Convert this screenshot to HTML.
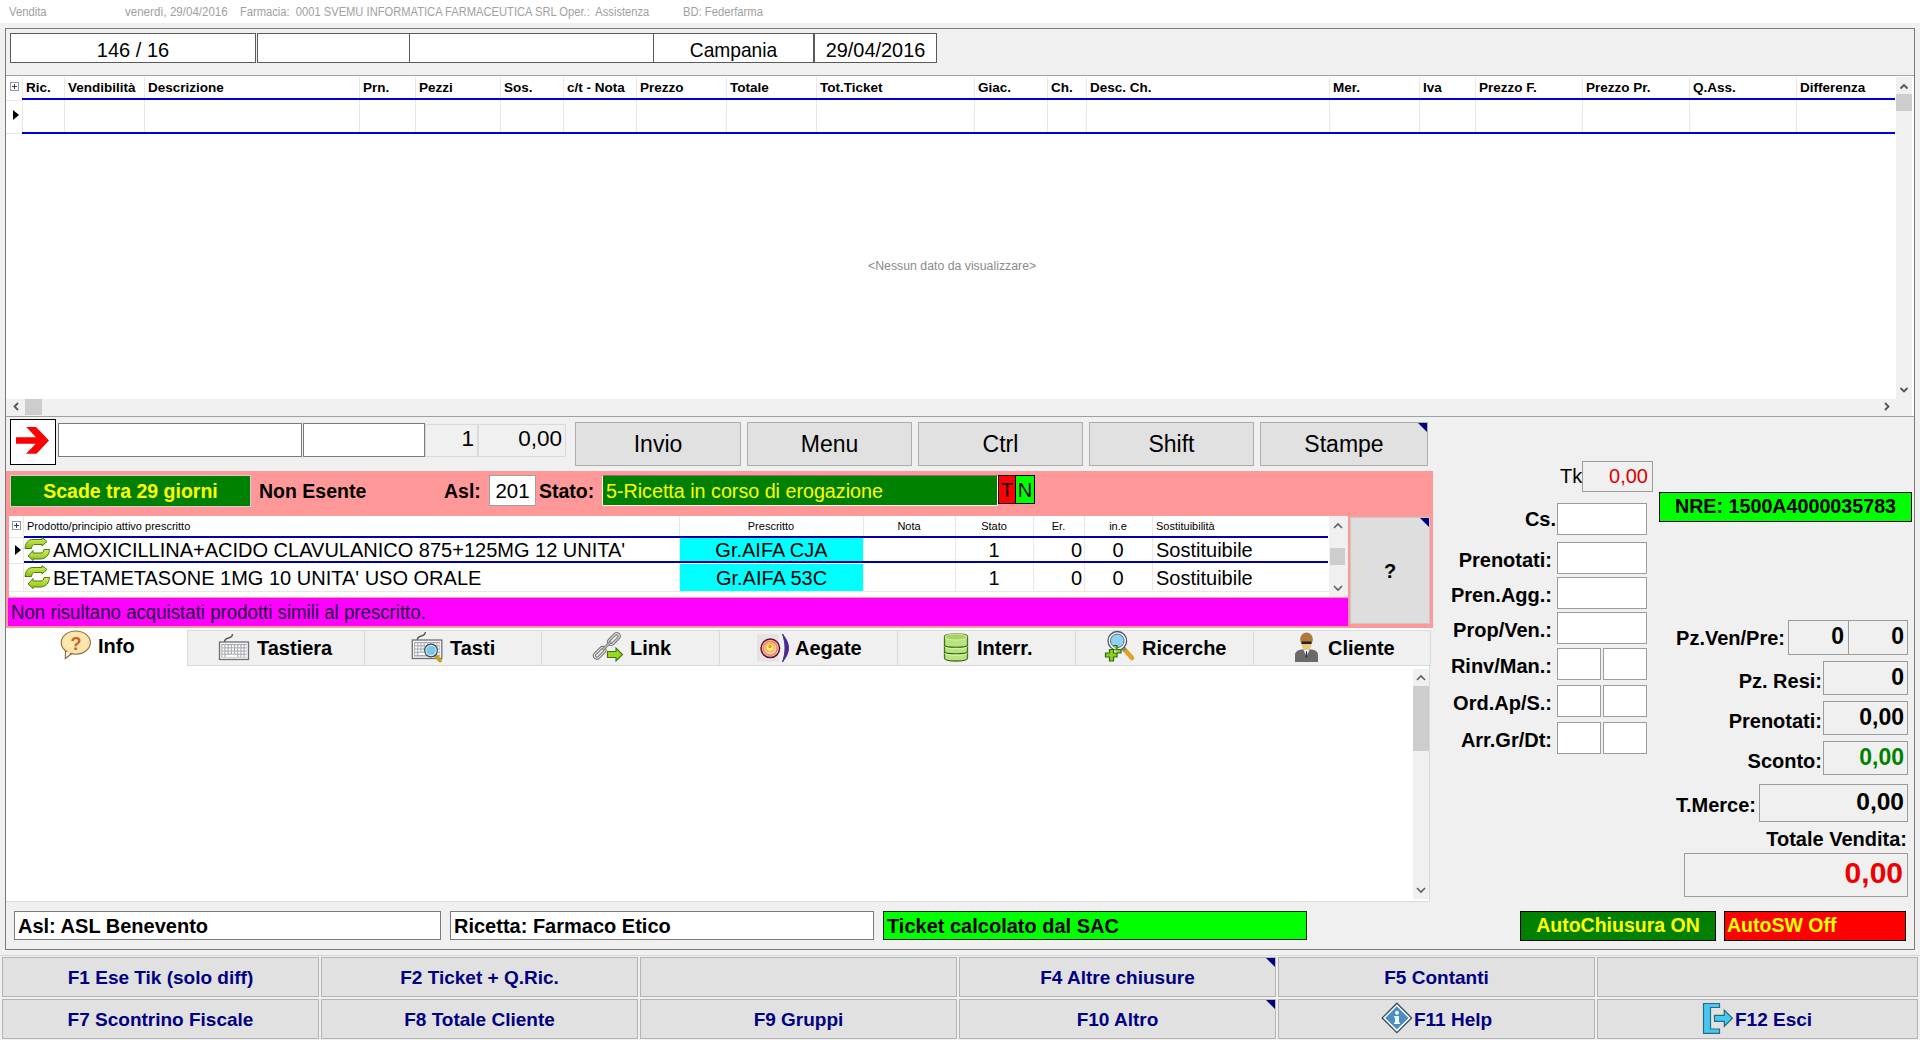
<!DOCTYPE html>
<html><head><meta charset="utf-8">
<style>
*{box-sizing:border-box;margin:0;padding:0}
html,body{width:1920px;height:1040px;overflow:hidden;background:#f0f0f0;font-family:"Liberation Sans",sans-serif;position:relative}
.a{position:absolute}
.t{position:absolute;white-space:nowrap;line-height:1}
</style></head><body>

<div class="a" style="left:0px;top:0px;width:1920px;height:23px;background:#fff;"></div>
<div class="t" style="left:9px;top:6px;font-size:12px;color:#a0a0a0;transform:scaleX(0.94);transform-origin:0 0">Vendita</div>
<div class="t" style="left:125px;top:6px;font-size:12px;color:#a0a0a0;transform:scaleX(0.962);transform-origin:0 0">venerdì, 29/04/2016</div>
<div class="t" style="left:240px;top:6px;font-size:12px;color:#a0a0a0;transform:scaleX(0.93);transform-origin:0 0">Farmacia:&nbsp; 0001 SVEMU INFORMATICA FARMACEUTICA SRL Oper.:&nbsp; Assistenza</div>
<div class="t" style="left:683px;top:6px;font-size:12px;color:#a0a0a0;transform:scaleX(0.937);transform-origin:0 0">BD: Federfarma</div>
<div class="a" style="left:5px;top:28px;width:1910px;height:922px;background:#f0f0f0;border:1px solid #7a7a7a;"></div>
<div class="a" style="left:10px;top:33px;width:246px;height:30px;background:#fff;border:1px solid #5a5a5a;"></div>
<div class="t" style="left:10px;top:39px;font-size:21px;color:#000;width:246px;text-align:center;transform:scaleX(0.953);transform-origin:50% 0">146 / 16</div>
<div class="a" style="left:257px;top:33px;width:153px;height:30px;background:#fff;border:1px solid #5a5a5a;"></div>
<div class="a" style="left:409px;top:33px;width:245px;height:30px;background:#fff;border:1px solid #5a5a5a;"></div>
<div class="a" style="left:653px;top:33px;width:161px;height:30px;background:#fff;border:1px solid #5a5a5a;"></div>
<div class="t" style="left:653px;top:39px;font-size:21px;color:#000;width:161px;text-align:center;transform:scaleX(0.913);transform-origin:50% 0">Campania</div>
<div class="a" style="left:814px;top:33px;width:123px;height:30px;background:#fff;border:1px solid #5a5a5a;"></div>
<div class="t" style="left:814px;top:39px;font-size:21px;color:#000;width:123px;text-align:center;transform:scaleX(0.947);transform-origin:50% 0">29/04/2016</div>
<div class="a" style="left:6px;top:75px;width:1908px;height:342px;background:#fff;border-top:1px solid #a0a0a0;border-bottom:1px solid #a0a0a0"></div>
<div class="a" style="left:22px;top:77px;width:1px;height:56px;background:#e8e8e8;"></div>
<div class="t" style="left:26px;top:81px;font-size:13.5px;color:#000;font-weight:bold;">Ric.</div>
<div class="a" style="left:64px;top:77px;width:1px;height:56px;background:#e8e8e8;"></div>
<div class="t" style="left:68px;top:81px;font-size:13.5px;color:#000;font-weight:bold;">Vendibilità</div>
<div class="a" style="left:144px;top:77px;width:1px;height:56px;background:#e8e8e8;"></div>
<div class="t" style="left:148px;top:81px;font-size:13.5px;color:#000;font-weight:bold;">Descrizione</div>
<div class="a" style="left:359px;top:77px;width:1px;height:56px;background:#e8e8e8;"></div>
<div class="t" style="left:363px;top:81px;font-size:13.5px;color:#000;font-weight:bold;">Prn.</div>
<div class="a" style="left:415px;top:77px;width:1px;height:56px;background:#e8e8e8;"></div>
<div class="t" style="left:419px;top:81px;font-size:13.5px;color:#000;font-weight:bold;">Pezzi</div>
<div class="a" style="left:500px;top:77px;width:1px;height:56px;background:#e8e8e8;"></div>
<div class="t" style="left:504px;top:81px;font-size:13.5px;color:#000;font-weight:bold;">Sos.</div>
<div class="a" style="left:563px;top:77px;width:1px;height:56px;background:#e8e8e8;"></div>
<div class="t" style="left:567px;top:81px;font-size:13.5px;color:#000;font-weight:bold;">c/t - Nota</div>
<div class="a" style="left:636px;top:77px;width:1px;height:56px;background:#e8e8e8;"></div>
<div class="t" style="left:640px;top:81px;font-size:13.5px;color:#000;font-weight:bold;">Prezzo</div>
<div class="a" style="left:726px;top:77px;width:1px;height:56px;background:#e8e8e8;"></div>
<div class="t" style="left:730px;top:81px;font-size:13.5px;color:#000;font-weight:bold;">Totale</div>
<div class="a" style="left:816px;top:77px;width:1px;height:56px;background:#e8e8e8;"></div>
<div class="t" style="left:820px;top:81px;font-size:13.5px;color:#000;font-weight:bold;">Tot.Ticket</div>
<div class="a" style="left:974px;top:77px;width:1px;height:56px;background:#e8e8e8;"></div>
<div class="t" style="left:978px;top:81px;font-size:13.5px;color:#000;font-weight:bold;">Giac.</div>
<div class="a" style="left:1047px;top:77px;width:1px;height:56px;background:#e8e8e8;"></div>
<div class="t" style="left:1051px;top:81px;font-size:13.5px;color:#000;font-weight:bold;">Ch.</div>
<div class="a" style="left:1086px;top:77px;width:1px;height:56px;background:#e8e8e8;"></div>
<div class="t" style="left:1090px;top:81px;font-size:13.5px;color:#000;font-weight:bold;">Desc. Ch.</div>
<div class="a" style="left:1329px;top:77px;width:1px;height:56px;background:#e8e8e8;"></div>
<div class="t" style="left:1333px;top:81px;font-size:13.5px;color:#000;font-weight:bold;">Mer.</div>
<div class="a" style="left:1419px;top:77px;width:1px;height:56px;background:#e8e8e8;"></div>
<div class="t" style="left:1423px;top:81px;font-size:13.5px;color:#000;font-weight:bold;">Iva</div>
<div class="a" style="left:1475px;top:77px;width:1px;height:56px;background:#e8e8e8;"></div>
<div class="t" style="left:1479px;top:81px;font-size:13.5px;color:#000;font-weight:bold;">Prezzo F.</div>
<div class="a" style="left:1582px;top:77px;width:1px;height:56px;background:#e8e8e8;"></div>
<div class="t" style="left:1586px;top:81px;font-size:13.5px;color:#000;font-weight:bold;">Prezzo Pr.</div>
<div class="a" style="left:1689px;top:77px;width:1px;height:56px;background:#e8e8e8;"></div>
<div class="t" style="left:1693px;top:81px;font-size:13.5px;color:#000;font-weight:bold;">Q.Ass.</div>
<div class="a" style="left:1796px;top:77px;width:1px;height:56px;background:#e8e8e8;"></div>
<div class="t" style="left:1800px;top:81px;font-size:13.5px;color:#000;font-weight:bold;">Differenza</div>
<div class="a" style="left:6px;top:100px;width:16px;height:1px;background:#e8e8e8;"></div>
<div class="a" style="left:6px;top:133px;width:16px;height:1px;background:#e8e8e8;"></div>
<div class="a" style="left:22px;top:98px;width:1873px;height:2px;background:#0000dd;"></div>
<div class="a" style="left:22px;top:132px;width:1873px;height:2px;background:#0000dd;"></div>
<svg class="a" style="left:10px;top:82px" width="9" height="9" viewBox="0 0 9 9"><rect x="0.5" y="0.5" width="8" height="8" fill="#fff" stroke="#8a96a8"/><path d="M2 4.5 H7 M4.5 2 V7" stroke="#3a4050" stroke-width="1"/></svg>
<div class="a" style="left:13px;top:110px;width:0;height:0;border-top:5px solid transparent;border-bottom:5px solid transparent;border-left:6px solid #000"></div>
<div class="t" style="left:868px;top:260px;font-size:12.3px;color:#8a8a8a;">&lt;Nessun dato da visualizzare&gt;</div>
<div class="a" style="left:1896px;top:77px;width:16px;height:322px;background:#f0f0f0;"></div>
<div class="a" style="left:1896px;top:94px;width:16px;height:17px;background:#cdcdcd;"></div>
<svg class="a" style="left:1896px;top:80px" width="16" height="12" viewBox="0 0 16 12"><path d="M4.5 8.5 L8 5 L11.5 8.5" stroke="#555" stroke-width="1.8" fill="none"/></svg>
<svg class="a" style="left:1896px;top:384px" width="16" height="12" viewBox="0 0 16 12"><path d="M4.5 4 L8 7.5 L11.5 4" stroke="#555" stroke-width="1.8" fill="none"/></svg>
<div class="a" style="left:6px;top:399px;width:1906px;height:17px;background:#f0f0f0;"></div>
<div class="a" style="left:25px;top:399px;width:17px;height:16px;background:#cdcdcd;"></div>
<svg class="a" style="left:8px;top:399px" width="16" height="16" viewBox="0 0 16 16"><path d="M10 4 L6.5 7.5 L10 11" stroke="#555" stroke-width="1.8" fill="none"/></svg>
<svg class="a" style="left:1879px;top:399px" width="16" height="16" viewBox="0 0 16 16"><path d="M6 4 L9.5 7.5 L6 11" stroke="#555" stroke-width="1.8" fill="none"/></svg>
<div class="a" style="left:10px;top:419px;width:46px;height:46px;background:#fff;border:1px solid #000;"></div>
<svg class="a" style="left:8px;top:416px" width="52" height="52" viewBox="0 0 52 52"><path d="M8 21.25 H31 V27.75 H8 Z M18.25 11 H28 L41 24.5 L28.5 37.75 H18 L31 24.5 Z" fill="#ff0000"/></svg>
<div class="a" style="left:58px;top:423px;width:244px;height:34px;background:#fff;border:1px solid #7a7a7a;"></div>
<div class="a" style="left:303px;top:423px;width:122px;height:34px;background:#fff;border:1px solid #7a7a7a;"></div>
<div class="a" style="left:425px;top:424px;width:53px;height:33px;background:#f0f0f0;border:1px solid #dadada;"></div>
<div class="t" style="right:1446px;top:428px;font-size:22.5px;color:#000;">1</div>
<div class="a" style="left:478px;top:424px;width:88px;height:33px;background:#f0f0f0;border:1px solid #dadada;"></div>
<div class="t" style="right:1358px;top:428px;font-size:22.5px;color:#000;">0,00</div>
<div class="a" style="left:575px;top:422px;width:166px;height:44px;background:#e1e1e1;border:1px solid #adadad;"></div>
<div class="t" style="left:575px;top:433px;font-size:23px;color:#000;width:166px;text-align:center;">Invio</div>
<div class="a" style="left:747px;top:422px;width:165px;height:44px;background:#e1e1e1;border:1px solid #adadad;"></div>
<div class="t" style="left:747px;top:433px;font-size:23px;color:#000;width:165px;text-align:center;">Menu</div>
<div class="a" style="left:918px;top:422px;width:165px;height:44px;background:#e1e1e1;border:1px solid #adadad;"></div>
<div class="t" style="left:918px;top:433px;font-size:23px;color:#000;width:165px;text-align:center;">Ctrl</div>
<div class="a" style="left:1089px;top:422px;width:165px;height:44px;background:#e1e1e1;border:1px solid #adadad;"></div>
<div class="t" style="left:1089px;top:433px;font-size:23px;color:#000;width:165px;text-align:center;">Shift</div>
<div class="a" style="left:1260px;top:422px;width:168px;height:44px;background:#e1e1e1;border:1px solid #adadad;"></div>
<div class="t" style="left:1260px;top:433px;font-size:23px;color:#000;width:168px;text-align:center;">Stampe</div>
<svg class="a" style="left:1418px;top:423px" width="9" height="9" viewBox="0 0 9 9"><path d="M0 0 H9 V9 Z" fill="#000080"/></svg>
<div class="a" style="left:6px;top:471px;width:1427px;height:157px;background:#ff9999;"></div>
<div class="a" style="left:10px;top:475px;width:241px;height:32px;background:#008000;border:1px solid #d0d0d0;"></div>
<div class="t" style="left:10px;top:482px;font-size:19.5px;color:#ffff00;font-weight:bold;width:241px;text-align:center;">Scade tra 29 giorni</div>
<div class="t" style="left:259px;top:482px;font-size:19.5px;color:#000;font-weight:bold;">Non Esente</div>
<div class="t" style="left:444px;top:482px;font-size:19.5px;color:#000;font-weight:bold;">Asl:</div>
<div class="a" style="left:489px;top:475px;width:47px;height:31px;background:#fff;border:1px solid #a0a0a0;"></div>
<div class="t" style="left:489px;top:481px;font-size:20.5px;color:#000;width:47px;text-align:center;">201</div>
<div class="t" style="left:539px;top:482px;font-size:19.5px;color:#000;font-weight:bold;">Stato:</div>
<div class="a" style="left:602px;top:475px;width:396px;height:31px;background:#008000;border:1px solid #f4f4f4;border-top-color:#907070"></div>
<div class="t" style="left:606px;top:482px;font-size:19.7px;color:#ffff00;">5-Ricetta in corso di erogazione</div>
<div class="a" style="left:998px;top:475px;width:18px;height:29px;background:#ff0000;border:1px solid #000;"></div>
<div class="t" style="left:998px;top:480px;font-size:20px;color:#000;width:18px;text-align:center;">T</div>
<div class="a" style="left:1015px;top:475px;width:20px;height:29px;background:#00ff00;border:1px solid #000;"></div>
<div class="t" style="left:1015px;top:480px;font-size:20px;color:#000;width:20px;text-align:center;">N</div>
<div class="a" style="left:9px;top:516px;width:1339px;height:81px;background:#fff;"></div>
<div class="a" style="left:23px;top:516px;width:1px;height:75px;background:#e8e8e8;"></div>
<div class="a" style="left:679px;top:516px;width:1px;height:75px;background:#e8e8e8;"></div>
<div class="a" style="left:863px;top:516px;width:1px;height:75px;background:#e8e8e8;"></div>
<div class="a" style="left:955px;top:516px;width:1px;height:75px;background:#e8e8e8;"></div>
<div class="a" style="left:1033px;top:516px;width:1px;height:75px;background:#e8e8e8;"></div>
<div class="a" style="left:1084px;top:516px;width:1px;height:75px;background:#e8e8e8;"></div>
<div class="a" style="left:1152px;top:516px;width:1px;height:75px;background:#e8e8e8;"></div>
<div class="a" style="left:9px;top:591px;width:1320px;height:1px;background:#e8e8e8;"></div>
<div class="a" style="left:9px;top:537px;width:14px;height:1px;background:#e8e8e8;"></div>
<div class="a" style="left:9px;top:563px;width:14px;height:1px;background:#e8e8e8;"></div>
<svg class="a" style="left:12px;top:521px" width="9" height="9" viewBox="0 0 9 9"><rect x="0.5" y="0.5" width="8" height="8" fill="#fff" stroke="#8a96a8"/><path d="M2 4.5 H7 M4.5 2 V7" stroke="#3a4050" stroke-width="1"/></svg>
<div class="t" style="left:27px;top:521px;font-size:11px;color:#000;">Prodotto/principio attivo prescritto</div>
<div class="t" style="left:679px;top:521px;font-size:11px;color:#000;width:184px;text-align:center;">Prescritto</div>
<div class="t" style="left:863px;top:521px;font-size:11px;color:#000;width:92px;text-align:center;">Nota</div>
<div class="t" style="left:955px;top:521px;font-size:11px;color:#000;width:78px;text-align:center;">Stato</div>
<div class="t" style="left:1033px;top:521px;font-size:11px;color:#000;width:51px;text-align:center;">Er.</div>
<div class="t" style="left:1084px;top:521px;font-size:11px;color:#000;width:68px;text-align:center;">in.e</div>
<div class="t" style="left:1156px;top:521px;font-size:11px;color:#000;">Sostituibilità</div>
<div class="a" style="left:24px;top:536px;width:1304px;height:2px;background:#0000a8;"></div>
<div class="a" style="left:24px;top:561px;width:1304px;height:2px;background:#0000a8;"></div>
<div class="a" style="left:680px;top:538px;width:183px;height:23px;background:#00ffff;"></div>
<div class="a" style="left:680px;top:564px;width:183px;height:27px;background:#00ffff;"></div>
<div class="a" style="left:15px;top:545px;width:0;height:0;border-top:5px solid transparent;border-bottom:5px solid transparent;border-left:6px solid #000"></div>
<svg class="a" style="left:22px;top:536px" width="32" height="28" viewBox="0 0 32 28"><defs><linearGradient id="gA" x1="0" y1="0" x2="0" y2="1"><stop offset="0" stop-color="#d4f060"/><stop offset="1" stop-color="#8cc010"/></linearGradient></defs>
<path d="M3 12.5 C3.5 7 6 3.5 11 3.5 L20 3.5 L20 1.5 L25 5.5 L20 10 L20 8.5 L12.5 8.5 C10.5 8.5 10 10 9.5 12.5 Z" fill="url(#gA)" stroke="#4a7a10" stroke-width="1"/>
<path d="M27.5 13.5 C27 19 24 23 18 23 L11 23 L11 24.5 L6 20 L11 14.5 L11 17 L19 17 C21 17 21.5 16 22 13.5 Z" fill="url(#gA)" stroke="#4a7a10" stroke-width="1"/></svg>
<svg class="a" style="left:22px;top:564px" width="32" height="28" viewBox="0 0 32 28"><defs><linearGradient id="gB" x1="0" y1="0" x2="0" y2="1"><stop offset="0" stop-color="#d4f060"/><stop offset="1" stop-color="#8cc010"/></linearGradient></defs>
<path d="M3 12.5 C3.5 7 6 3.5 11 3.5 L20 3.5 L20 1.5 L25 5.5 L20 10 L20 8.5 L12.5 8.5 C10.5 8.5 10 10 9.5 12.5 Z" fill="url(#gB)" stroke="#4a7a10" stroke-width="1"/>
<path d="M27.5 13.5 C27 19 24 23 18 23 L11 23 L11 24.5 L6 20 L11 14.5 L11 17 L19 17 C21 17 21.5 16 22 13.5 Z" fill="url(#gB)" stroke="#4a7a10" stroke-width="1"/></svg>
<div class="t" style="left:53px;top:540px;font-size:20px;color:#000;">AMOXICILLINA+ACIDO CLAVULANICO 875+125MG 12 UNITA'</div>
<div class="t" style="left:53px;top:568px;font-size:20px;color:#000;">BETAMETASONE 1MG 10 UNITA' USO ORALE</div>
<div class="t" style="left:680px;top:540px;font-size:20px;color:#000;width:183px;text-align:center;">Gr.AIFA CJA</div>
<div class="t" style="left:680px;top:568px;font-size:20px;color:#000;width:183px;text-align:center;">Gr.AIFA 53C</div>
<div class="t" style="left:955px;top:540px;font-size:20px;color:#000;width:78px;text-align:center;">1</div>
<div class="t" style="right:838px;top:540px;font-size:20px;color:#000;">0</div>
<div class="t" style="left:1084px;top:540px;font-size:20px;color:#000;width:68px;text-align:center;">0</div>
<div class="t" style="left:1156px;top:540px;font-size:20px;color:#000;">Sostituibile</div>
<div class="t" style="left:955px;top:568px;font-size:20px;color:#000;width:78px;text-align:center;">1</div>
<div class="t" style="right:838px;top:568px;font-size:20px;color:#000;">0</div>
<div class="t" style="left:1084px;top:568px;font-size:20px;color:#000;width:68px;text-align:center;">0</div>
<div class="t" style="left:1156px;top:568px;font-size:20px;color:#000;">Sostituibile</div>
<div class="a" style="left:1329px;top:516px;width:19px;height:81px;background:#f0f0f0;"></div>
<div class="a" style="left:1330px;top:548px;width:15px;height:17px;background:#cdcdcd;"></div>
<svg class="a" style="left:1331px;top:520px" width="14" height="12" viewBox="0 0 14 12"><path d="M3 8 L7 4 L11 8" stroke="#606060" stroke-width="1.6" fill="none"/></svg>
<svg class="a" style="left:1331px;top:582px" width="14" height="12" viewBox="0 0 14 12"><path d="M3 4 L7 8 L11 4" stroke="#606060" stroke-width="1.6" fill="none"/></svg>
<div class="a" style="left:8px;top:598px;width:1340px;height:28px;background:#ff00ff;"></div>
<div class="t" style="left:11px;top:603px;font-size:19.5px;color:#1a0040;transform:scaleX(0.957);transform-origin:0 0">Non risultano acquistati prodotti simili al prescritto.</div>
<div class="a" style="left:1350px;top:517px;width:80px;height:107px;background:#dedede;border:1px solid #c8c8c8;"></div>
<div class="t" style="left:1350px;top:561px;font-size:20px;color:#000;font-weight:bold;width:80px;text-align:center;">?</div>
<svg class="a" style="left:1420px;top:518px" width="9" height="9" viewBox="0 0 9 9"><path d="M0 0 H9 V9 Z" fill="#000080"/></svg>
<div class="a" style="left:6px;top:628px;width:1424px;height:274px;background:#fff;"></div>
<div class="a" style="left:187px;top:630px;width:178px;height:36px;background:#f0f0f0;border:1px solid #dadada;"></div>
<div class="a" style="left:364px;top:630px;width:178px;height:36px;background:#f0f0f0;border:1px solid #dadada;"></div>
<div class="a" style="left:541px;top:630px;width:179px;height:36px;background:#f0f0f0;border:1px solid #dadada;"></div>
<div class="a" style="left:719px;top:630px;width:179px;height:36px;background:#f0f0f0;border:1px solid #dadada;"></div>
<div class="a" style="left:897px;top:630px;width:179px;height:36px;background:#f0f0f0;border:1px solid #dadada;"></div>
<div class="a" style="left:1075px;top:630px;width:179px;height:36px;background:#f0f0f0;border:1px solid #dadada;"></div>
<div class="a" style="left:1253px;top:630px;width:178px;height:36px;background:#f0f0f0;border:1px solid #dadada;"></div>
<div class="t" style="left:98px;top:636px;font-size:20px;color:#000;font-weight:bold;">Info</div>
<div class="t" style="left:257px;top:638px;font-size:20px;color:#000;font-weight:bold;">Tastiera</div>
<div class="t" style="left:450px;top:638px;font-size:20px;color:#000;font-weight:bold;">Tasti</div>
<div class="t" style="left:630px;top:638px;font-size:20px;color:#000;font-weight:bold;">Link</div>
<div class="t" style="left:795px;top:638px;font-size:20px;color:#000;font-weight:bold;">Aegate</div>
<div class="t" style="left:977px;top:638px;font-size:20px;color:#000;font-weight:bold;">Interr.</div>
<div class="t" style="left:1142px;top:638px;font-size:20px;color:#000;font-weight:bold;">Ricerche</div>
<div class="t" style="left:1328px;top:638px;font-size:20px;color:#000;font-weight:bold;">Cliente</div>
<svg class="a" style="left:56px;top:628px" width="40" height="34" viewBox="0 0 40 34"><path d="M9.5 21 L9.3 30.5 L16.5 25 Z" fill="#fff3d0" stroke="#8a6a50" stroke-width="1.1"/>
<ellipse cx="19.8" cy="14.6" rx="14.6" ry="11.6" fill="#ffe2a0" stroke="#8a6a50" stroke-width="1.1"/>
<path d="M10.8 23.5 L11 27.5 L15 24.5 Z" fill="#fff3d0"/>
<ellipse cx="19.8" cy="14" rx="12" ry="9" fill="#ffe8b0"/>
<text x="20" y="22" font-family="Liberation Sans" font-weight="bold" font-size="18" fill="#c8602a" text-anchor="middle">?</text></svg>
<svg class="a" style="left:214px;top:630px" width="40" height="34" viewBox="0 0 40 34"><path d="M10.5 12 C10.5 9 12.5 8.5 14.5 8 C16.5 7.5 18.5 7 18.5 4" stroke="#555" stroke-width="1.4" fill="none"/>
<rect x="5.5" y="12" width="29" height="17.5" fill="#f6f6f6" stroke="#707070" stroke-width="1.3"/>
<rect x="7.3" y="14" width="25.4" height="13.5" fill="#a8acb2"/><rect x="8.3" y="15.2" width="2.1" height="2.1" fill="#fff"/><rect x="11.5" y="15.2" width="2.1" height="2.1" fill="#fff"/><rect x="14.7" y="15.2" width="2.1" height="2.1" fill="#fff"/><rect x="17.9" y="15.2" width="2.1" height="2.1" fill="#fff"/><rect x="21.1" y="15.2" width="2.1" height="2.1" fill="#fff"/><rect x="24.3" y="15.2" width="2.1" height="2.1" fill="#fff"/><rect x="27.5" y="15.2" width="2.1" height="2.1" fill="#fff"/><rect x="30.7" y="15.2" width="2.1" height="2.1" fill="#fff"/><rect x="8.3" y="18.4" width="2.1" height="2.1" fill="#fff"/><rect x="11.5" y="18.4" width="2.1" height="2.1" fill="#fff"/><rect x="14.7" y="18.4" width="2.1" height="2.1" fill="#fff"/><rect x="17.9" y="18.4" width="2.1" height="2.1" fill="#fff"/><rect x="21.1" y="18.4" width="2.1" height="2.1" fill="#fff"/><rect x="24.3" y="18.4" width="2.1" height="2.1" fill="#fff"/><rect x="27.5" y="18.4" width="2.1" height="2.1" fill="#fff"/><rect x="30.7" y="18.4" width="2.1" height="2.1" fill="#fff"/><rect x="8.3" y="21.6" width="2.1" height="2.1" fill="#fff"/><rect x="11.5" y="21.6" width="2.1" height="2.1" fill="#fff"/><rect x="14.7" y="21.6" width="2.1" height="2.1" fill="#fff"/><rect x="17.9" y="21.6" width="2.1" height="2.1" fill="#fff"/><rect x="21.1" y="21.6" width="2.1" height="2.1" fill="#fff"/><rect x="24.3" y="21.6" width="2.1" height="2.1" fill="#fff"/><rect x="27.5" y="21.6" width="2.1" height="2.1" fill="#fff"/><rect x="30.7" y="21.6" width="2.1" height="2.1" fill="#fff"/><rect x="8.3" y="24.8" width="2.1" height="2.1" fill="#fff"/><rect x="24.3" y="24.8" width="2.1" height="2.1" fill="#fff"/><rect x="27.5" y="24.8" width="2.1" height="2.1" fill="#fff"/><rect x="30.7" y="24.8" width="2.1" height="2.1" fill="#fff"/><rect x="11.5" y="24.8" width="11.7" height="2.1" fill="#fff"/></svg>
<svg class="a" style="left:406px;top:630px" width="40" height="34" viewBox="0 0 40 34"><path d="M11.3 10 C11.3 7 13.3 6.5 15.3 6 C17.3 5.5 19.3 5 19.3 2" stroke="#555" stroke-width="1.4" fill="none"/>
<rect x="6.3" y="10" width="29.5" height="18.5" fill="#f6f6f6" stroke="#707070" stroke-width="1.3"/>
<rect x="8.1" y="12" width="25.9" height="14.5" fill="#a8acb2"/><rect x="9.1" y="13.2" width="2.1" height="2.1" fill="#fff"/><rect x="12.3" y="13.2" width="2.1" height="2.1" fill="#fff"/><rect x="15.5" y="13.2" width="2.1" height="2.1" fill="#fff"/><rect x="18.7" y="13.2" width="2.1" height="2.1" fill="#fff"/><rect x="21.9" y="13.2" width="2.1" height="2.1" fill="#fff"/><rect x="25.1" y="13.2" width="2.1" height="2.1" fill="#fff"/><rect x="28.3" y="13.2" width="2.1" height="2.1" fill="#fff"/><rect x="31.5" y="13.2" width="2.1" height="2.1" fill="#fff"/><rect x="9.1" y="16.4" width="2.1" height="2.1" fill="#fff"/><rect x="12.3" y="16.4" width="2.1" height="2.1" fill="#fff"/><rect x="15.5" y="16.4" width="2.1" height="2.1" fill="#fff"/><rect x="18.7" y="16.4" width="2.1" height="2.1" fill="#fff"/><rect x="21.9" y="16.4" width="2.1" height="2.1" fill="#fff"/><rect x="25.1" y="16.4" width="2.1" height="2.1" fill="#fff"/><rect x="28.3" y="16.4" width="2.1" height="2.1" fill="#fff"/><rect x="31.5" y="16.4" width="2.1" height="2.1" fill="#fff"/><rect x="9.1" y="19.6" width="2.1" height="2.1" fill="#fff"/><rect x="12.3" y="19.6" width="2.1" height="2.1" fill="#fff"/><rect x="15.5" y="19.6" width="2.1" height="2.1" fill="#fff"/><rect x="18.7" y="19.6" width="2.1" height="2.1" fill="#fff"/><rect x="21.9" y="19.6" width="2.1" height="2.1" fill="#fff"/><rect x="25.1" y="19.6" width="2.1" height="2.1" fill="#fff"/><rect x="28.3" y="19.6" width="2.1" height="2.1" fill="#fff"/><rect x="31.5" y="19.6" width="2.1" height="2.1" fill="#fff"/><rect x="9.1" y="22.8" width="2.1" height="2.1" fill="#fff"/><rect x="25.1" y="22.8" width="2.1" height="2.1" fill="#fff"/><rect x="28.3" y="22.8" width="2.1" height="2.1" fill="#fff"/><rect x="31.5" y="22.8" width="2.1" height="2.1" fill="#fff"/><rect x="12.3" y="22.8" width="11.7" height="2.1" fill="#fff"/><line x1="29" y1="25" x2="34" y2="30.5" stroke="#c8a020" stroke-width="4" stroke-linecap="round"/>
<circle cx="25" cy="20.5" r="6.3" fill="#e8f8ff" stroke="#404850" stroke-width="1.2"/>
<circle cx="25" cy="20.5" r="4.8" fill="#78c8ec"/></svg>
<svg class="a" style="left:588px;top:630px" width="40" height="34" viewBox="0 0 40 34"><g transform="rotate(-45 25.9 9)"><rect x="19.5" y="6.5" width="12.8" height="5" rx="2.5" fill="none" stroke="#7a7a7a" stroke-width="3.2"/><rect x="19.5" y="6.5" width="12.8" height="5" rx="2.5" fill="none" stroke="#e8e8e8" stroke-width="1"/></g>
<g transform="rotate(-45 11.7 22.9)"><rect x="5.3" y="20.4" width="12.8" height="5" rx="2.5" fill="none" stroke="#7a7a7a" stroke-width="3.2"/><rect x="5.3" y="20.4" width="12.8" height="5" rx="2.5" fill="none" stroke="#e8e8e8" stroke-width="1"/></g>
<line x1="14.5" y1="20" x2="23" y2="11.5" stroke="#7a7a7a" stroke-width="2.6"/>
<line x1="14.5" y1="20" x2="23" y2="11.5" stroke="#f0f0f0" stroke-width="0.9"/>
<path d="M19.5 21.5 H28 V18 L34.5 24.5 L28 31 V27.5 H19.5 Z" fill="#9ad820" stroke="#3c7010" stroke-width="1.1"/></svg>
<svg class="a" style="left:754px;top:630px" width="40" height="34" viewBox="0 0 40 34"><rect x="3" y="4" width="22" height="27.5" fill="#e4e4e4"/>
<circle cx="16.3" cy="18.3" r="9.3" fill="#ffd0b8" stroke="#5a1040" stroke-width="1.5"/>
<circle cx="16.3" cy="18.3" r="7" fill="none" stroke="#f08850" stroke-width="1.6"/>
<circle cx="16" cy="17.5" r="4.2" fill="#ffe890" stroke="#f0b040" stroke-width="1.2"/>
<rect x="14.5" y="15" width="3" height="3" fill="#e8a000"/>
<path d="M28.5 4 C33 10 34.5 14 34.5 18 C34.5 22 33 26 28.5 32 C30.5 26 31 22 31 18 C31 14 30.5 10 28.5 4 Z" fill="#4a2890" stroke="#4a2890" stroke-width="1"/></svg>
<svg class="a" style="left:936px;top:630px" width="40" height="34" viewBox="0 0 40 34"><path d="M8.5 6.5 C8.5 3 31.5 3 31.5 6.5 V28 C31.5 32 8.5 32 8.5 28 Z" fill="#b8e480" stroke="#4a7020" stroke-width="1.3"/>
<ellipse cx="20" cy="7" rx="11" ry="3" fill="#a8d068" stroke="#d8ff98" stroke-width="0.8"/>
<path d="M8.5 15 C8.5 18 31.5 18 31.5 15" fill="none" stroke="#3a6018" stroke-width="1.2"/>
<path d="M8.5 16.5 C8.5 19.5 31.5 19.5 31.5 16.5" fill="none" stroke="#e0ffb0" stroke-width="0.8"/>
<path d="M8.5 21.5 C8.5 24.5 31.5 24.5 31.5 21.5" fill="none" stroke="#3a6018" stroke-width="1.2"/>
<path d="M8.5 23 C8.5 26 31.5 26 31.5 23" fill="none" stroke="#e0ffb0" stroke-width="0.8"/></svg>
<svg class="a" style="left:1100px;top:628px" width="40" height="36" viewBox="0 0 40 36"><line x1="24" y1="21" x2="32" y2="30" stroke="#e0a020" stroke-width="4.5" stroke-linecap="round"/>
<line x1="23" y1="20" x2="25" y2="22.5" stroke="#888" stroke-width="4"/>
<circle cx="17.3" cy="12.8" r="9.3" fill="#ffffff" stroke="#505860" stroke-width="1.3"/>
<circle cx="17.3" cy="12.8" r="6.8" fill="#90d0f0" stroke="#406080" stroke-width="0.9"/>
<path d="M9.5 21.5 H13.5 V25 H17 V29 H13.5 V33 H9.5 V29 H5.5 V25 H9.5 Z" fill="#8cd020" stroke="#2e6a10" stroke-width="1.2"/>
<path d="M13.5 17.5 H17 V21.5 H21 V25 H17" fill="#8cd020" stroke="#2e6a10" stroke-width="1.2"/></svg>
<svg class="a" style="left:1288px;top:628px" width="40" height="36" viewBox="0 0 40 36"><path d="M7 34 V27 C7 23 11 21.5 15 21.5 H22 C26 21.5 30 23 30 27 V34 Z" fill="#6a6a6a"/>
<path d="M15.5 21.5 L18.5 29 L21.5 21.5 Z" fill="#fff"/>
<path d="M18 23 L19 23 L19.5 29 L18.5 30 L17.5 29 Z" fill="#303848"/>
<ellipse cx="18.5" cy="11.5" rx="6.3" ry="7" fill="#b07838"/>
<path d="M13.5 14 C13.5 20 15.5 22 18.5 22 C21.5 22 23.5 20 23.5 14 Z" fill="#e8c878"/>
<path d="M13.5 13.5 H23.5 V16 H13.5 Z" fill="#222"/></svg>
<div class="a" style="left:1413px;top:669px;width:16px;height:230px;background:#f0f0f0;"></div>
<div class="a" style="left:1413px;top:686px;width:16px;height:65px;background:#cdcdcd;"></div>
<svg class="a" style="left:1413px;top:672px" width="16" height="12" viewBox="0 0 16 12"><path d="M4 8 L8 4 L12 8" stroke="#606060" stroke-width="1.6" fill="none"/></svg>
<svg class="a" style="left:1413px;top:884px" width="16" height="12" viewBox="0 0 16 12"><path d="M4 4 L8 8 L12 4" stroke="#606060" stroke-width="1.6" fill="none"/></svg>
<div class="a" style="left:1429px;top:666px;width:1px;height:236px;background:#dadada;"></div>
<div class="a" style="left:6px;top:901px;width:1424px;height:1px;background:#dadada;"></div>
<div class="a" style="left:14px;top:911px;width:427px;height:29px;background:#fff;border:1px solid #7a7a7a;"></div>
<div class="t" style="left:18px;top:916px;font-size:20px;color:#000;font-weight:bold;">Asl: ASL Benevento</div>
<div class="a" style="left:450px;top:911px;width:424px;height:29px;background:#fff;border:1px solid #7a7a7a;"></div>
<div class="t" style="left:454px;top:916px;font-size:20px;color:#000;font-weight:bold;">Ricetta: Farmaco Etico</div>
<div class="a" style="left:883px;top:911px;width:424px;height:29px;background:#00ff00;border:1px solid #222;"></div>
<div class="t" style="left:887px;top:916px;font-size:20px;color:#000;font-weight:bold;">Ticket calcolato dal SAC</div>
<div class="t" style="left:1560px;top:466px;font-size:20px;color:#000;">Tk</div>
<div class="a" style="left:1582px;top:461px;width:71px;height:31px;background:#f0f0f0;border:1px solid #9c9c9c;"></div>
<div class="t" style="right:272px;top:466px;font-size:20px;color:#dd0000;">0,00</div>
<div class="a" style="left:1659px;top:492px;width:253px;height:30px;background:#00ff00;border:1px solid #000;"></div>
<div class="t" style="left:1659px;top:497px;font-size:19.7px;color:#000;font-weight:bold;width:253px;text-align:center;">NRE: 1500A4000035783</div>
<div class="t" style="right:364px;top:509px;font-size:20px;color:#000;font-weight:bold;">Cs.</div>
<div class="a" style="left:1557px;top:503px;width:90px;height:32px;background:#fff;border:1px solid #9c9c9c;"></div>
<div class="t" style="right:368px;top:550px;font-size:20px;color:#000;font-weight:bold;">Prenotati:</div>
<div class="a" style="left:1557px;top:542px;width:90px;height:32px;background:#fff;border:1px solid #9c9c9c;"></div>
<div class="t" style="right:368px;top:585px;font-size:20px;color:#000;font-weight:bold;">Pren.Agg.:</div>
<div class="a" style="left:1557px;top:577px;width:90px;height:32px;background:#fff;border:1px solid #9c9c9c;"></div>
<div class="t" style="right:368px;top:620px;font-size:20px;color:#000;font-weight:bold;">Prop/Ven.:</div>
<div class="a" style="left:1557px;top:612px;width:90px;height:32px;background:#fff;border:1px solid #9c9c9c;"></div>
<div class="t" style="right:368px;top:656px;font-size:20px;color:#000;font-weight:bold;">Rinv/Man.:</div>
<div class="a" style="left:1557px;top:648px;width:44px;height:32px;background:#fff;border:1px solid #9c9c9c;"></div>
<div class="a" style="left:1603px;top:648px;width:44px;height:32px;background:#fff;border:1px solid #9c9c9c;"></div>
<div class="t" style="right:368px;top:693px;font-size:20px;color:#000;font-weight:bold;">Ord.Ap/S.:</div>
<div class="a" style="left:1557px;top:685px;width:44px;height:32px;background:#fff;border:1px solid #9c9c9c;"></div>
<div class="a" style="left:1603px;top:685px;width:44px;height:32px;background:#fff;border:1px solid #9c9c9c;"></div>
<div class="t" style="right:368px;top:730px;font-size:20px;color:#000;font-weight:bold;">Arr.Gr/Dt:</div>
<div class="a" style="left:1557px;top:722px;width:44px;height:32px;background:#fff;border:1px solid #9c9c9c;"></div>
<div class="a" style="left:1603px;top:722px;width:44px;height:32px;background:#fff;border:1px solid #9c9c9c;"></div>
<div class="t" style="right:135px;top:628px;font-size:20px;color:#000;font-weight:bold;">Pz.Ven/Pre:</div>
<div class="a" style="left:1788px;top:620px;width:61px;height:35px;background:#f0f0f0;border:1px solid #9c9c9c;"></div>
<div class="a" style="left:1848px;top:620px;width:60px;height:35px;background:#f0f0f0;border:1px solid #9c9c9c;"></div>
<div class="t" style="right:76px;top:625px;font-size:23px;color:#000;font-weight:bold;">0</div>
<div class="t" style="right:16px;top:625px;font-size:23px;color:#000;font-weight:bold;">0</div>
<div class="t" style="right:98px;top:671px;font-size:20px;color:#000;font-weight:bold;">Pz. Resi:</div>
<div class="a" style="left:1823px;top:661px;width:85px;height:34px;background:#f0f0f0;border:1px solid #9c9c9c;"></div>
<div class="t" style="right:16px;top:666px;font-size:23px;color:#000;font-weight:bold;">0</div>
<div class="t" style="right:98px;top:711px;font-size:20px;color:#000;font-weight:bold;">Prenotati:</div>
<div class="a" style="left:1823px;top:701px;width:85px;height:34px;background:#f0f0f0;border:1px solid #9c9c9c;"></div>
<div class="t" style="right:16px;top:706px;font-size:23px;color:#000;font-weight:bold;">0,00</div>
<div class="t" style="right:98px;top:751px;font-size:20px;color:#000;font-weight:bold;">Sconto:</div>
<div class="a" style="left:1823px;top:741px;width:85px;height:34px;background:#f0f0f0;border:1px solid #9c9c9c;"></div>
<div class="t" style="right:16px;top:746px;font-size:23px;color:#008000;font-weight:bold;">0,00</div>
<div class="t" style="right:164px;top:795px;font-size:20px;color:#000;font-weight:bold;">T.Merce:</div>
<div class="a" style="left:1759px;top:784px;width:149px;height:38px;background:#f0f0f0;border:1px solid #9c9c9c;"></div>
<div class="t" style="right:16px;top:790px;font-size:24.5px;color:#000;font-weight:bold;">0,00</div>
<div class="t" style="right:13px;top:829px;font-size:20px;color:#000;font-weight:bold;">Totale Vendita:</div>
<div class="a" style="left:1684px;top:853px;width:224px;height:44px;background:#f0f0f0;border:1px solid #9c9c9c;"></div>
<div class="t" style="right:17px;top:858px;font-size:30px;color:#ee0000;font-weight:bold;">0,00</div>
<div class="a" style="left:1520px;top:911px;width:196px;height:30px;background:#008000;border:1px solid #000;"></div>
<div class="t" style="left:1520px;top:916px;font-size:19.5px;color:#ffff00;font-weight:bold;width:196px;text-align:center;">AutoChiusura ON</div>
<div class="a" style="left:1724px;top:911px;width:182px;height:30px;background:#ff0000;border:1px solid #000;"></div>
<div class="t" style="left:1727px;top:916px;font-size:19.5px;color:#ffff00;font-weight:bold;">AutoSW Off</div>
<div class="a" style="left:0px;top:955px;width:1920px;height:1px;background:#d8d8d8;"></div>
<div class="a" style="left:2px;top:957px;width:317px;height:40px;background:#e1e1e1;border:1px solid #b4b4b4;"></div>
<div class="a" style="left:2px;top:999px;width:317px;height:40px;background:#e1e1e1;border:1px solid #b4b4b4;"></div>
<div class="t" style="left:2px;top:968px;font-size:19px;color:#000080;font-weight:bold;width:317px;text-align:center;">F1 Ese Tik (solo diff)</div>
<div class="t" style="left:2px;top:1010px;font-size:19px;color:#000080;font-weight:bold;width:317px;text-align:center;">F7 Scontrino Fiscale</div>
<div class="a" style="left:321px;top:957px;width:317px;height:40px;background:#e1e1e1;border:1px solid #b4b4b4;"></div>
<div class="a" style="left:321px;top:999px;width:317px;height:40px;background:#e1e1e1;border:1px solid #b4b4b4;"></div>
<div class="t" style="left:321px;top:968px;font-size:19px;color:#000080;font-weight:bold;width:317px;text-align:center;">F2 Ticket + Q.Ric.</div>
<div class="t" style="left:321px;top:1010px;font-size:19px;color:#000080;font-weight:bold;width:317px;text-align:center;">F8 Totale Cliente</div>
<div class="a" style="left:640px;top:957px;width:317px;height:40px;background:#e1e1e1;border:1px solid #b4b4b4;"></div>
<div class="a" style="left:640px;top:999px;width:317px;height:40px;background:#e1e1e1;border:1px solid #b4b4b4;"></div>
<div class="t" style="left:640px;top:1010px;font-size:19px;color:#000080;font-weight:bold;width:317px;text-align:center;">F9 Gruppi</div>
<div class="a" style="left:959px;top:957px;width:317px;height:40px;background:#e1e1e1;border:1px solid #b4b4b4;"></div>
<div class="a" style="left:959px;top:999px;width:317px;height:40px;background:#e1e1e1;border:1px solid #b4b4b4;"></div>
<div class="t" style="left:959px;top:968px;font-size:19px;color:#000080;font-weight:bold;width:317px;text-align:center;">F4 Altre chiusure</div>
<div class="t" style="left:959px;top:1010px;font-size:19px;color:#000080;font-weight:bold;width:317px;text-align:center;">F10 Altro</div>
<div class="a" style="left:1278px;top:957px;width:317px;height:40px;background:#e1e1e1;border:1px solid #b4b4b4;"></div>
<div class="a" style="left:1278px;top:999px;width:317px;height:40px;background:#e1e1e1;border:1px solid #b4b4b4;"></div>
<div class="t" style="left:1278px;top:968px;font-size:19px;color:#000080;font-weight:bold;width:317px;text-align:center;">F5 Contanti</div>
<div class="a" style="left:1597px;top:957px;width:321px;height:40px;background:#e1e1e1;border:1px solid #b4b4b4;"></div>
<div class="a" style="left:1597px;top:999px;width:321px;height:40px;background:#e1e1e1;border:1px solid #b4b4b4;"></div>
<div class="t" style="left:1414px;top:1010px;font-size:19px;color:#000080;font-weight:bold;">F11 Help</div>
<div class="t" style="left:1735px;top:1010px;font-size:19px;color:#000080;font-weight:bold;">F12 Esci</div>
<svg class="a" style="left:1266px;top:958px" width="9" height="9" viewBox="0 0 9 9"><path d="M0 0 H9 V9 Z" fill="#000080"/></svg>
<svg class="a" style="left:1266px;top:1000px" width="9" height="9" viewBox="0 0 9 9"><path d="M0 0 H9 V9 Z" fill="#000080"/></svg>
<svg class="a" style="left:1376px;top:1000px" width="40" height="38" viewBox="0 0 40 38"><path d="M20.9 3.2 L35.6 17.9 L20.9 32.6 L6.2 17.9 Z" fill="#fff" stroke="#34465c" stroke-width="1.3"/>
<path d="M20.9 6.2 L32.6 17.9 L20.9 29.6 L9.2 17.9 Z" fill="#4e8cc4"/>
<circle cx="21" cy="12.8" r="2" fill="#e8fbff"/>
<path d="M18 16 H23 V22.5 H24 V24 H18 V22.5 H19 V17.5 H18 Z" fill="#e8fbff"/></svg>
<svg class="a" style="left:1696px;top:1000px" width="40" height="38" viewBox="0 0 40 38"><path d="M7.5 3.5 H23.5 V7.5 H14.5 V29 H23.5 V33.3 H7.5 Z" fill="#48c8f0" stroke="#2a6a80" stroke-width="1.2"/>
<path d="M18.5 15.3 H28.3 V10.2 L36.5 18.3 L28.3 26.3 V21.3 H18.5 Z" fill="#48c8f0" stroke="#2a6a80" stroke-width="1.2"/></svg>
</body></html>
